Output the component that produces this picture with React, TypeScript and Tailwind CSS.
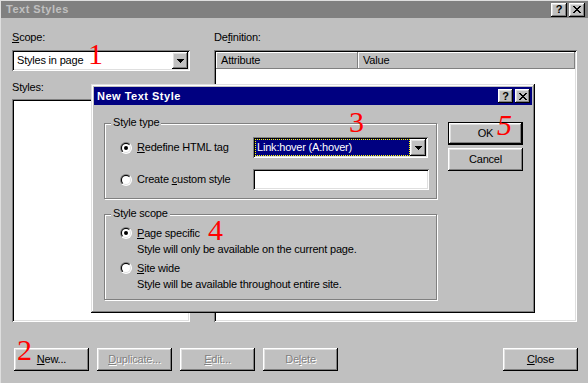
import React from "react";

const raised =
  "shadow-[inset_-1px_-1px_#000,inset_1px_1px_#fff,inset_-2px_-2px_#808080,inset_2px_2px_#dfdfdf]";
const sunken =
  "shadow-[inset_1px_1px_#808080,inset_-1px_-1px_#fff,inset_2px_2px_#000,inset_-2px_-2px_#dfdfdf]";

function U({ children }: { children: React.ReactNode }) {
  return <span className="underline decoration-1 underline-offset-[1px]">{children}</span>;
}

function Arrow() {
  return (
    <svg width="7" height="4" viewBox="0 0 7 4" shapeRendering="crispEdges">
      <path d="M0 0h7v1h-7z M1 1h5v1h-5z M2 2h3v1h-3z M3 3h1v1h-1z" fill="#000" />
    </svg>
  );
}

function CloseGlyph() {
  return (
    <svg width="8" height="7" viewBox="0 0 8 7" shapeRendering="crispEdges">
      <path
        d="M0 0h2v1h-2z M6 0h2v1h-2z M1 1h2v1h-2z M5 1h2v1h-2z M2 2h4v1h-4z M3 3h2v1h-2z M2 4h4v1h-4z M1 5h2v1h-2z M5 5h2v1h-2z M0 6h2v1h-2z M6 6h2v1h-2z"
        fill="#000"
      />
    </svg>
  );
}

function CapBtns({ w }: { w: string }) {
  return (
    <div className="flex gap-[2px]">
      <div className={`${w} h-[14px] bg-[#c0c0c0] ${raised} flex items-center justify-center`}>
        <span className="font-bold text-[11px] leading-none tracking-normal text-black">?</span>
      </div>
      <div className={`${w} h-[14px] bg-[#c0c0c0] ${raised} flex items-center justify-center`}>
        <CloseGlyph />
      </div>
    </div>
  );
}

function Radio({ checked }: { checked?: boolean }) {
  return (
    <svg width="12" height="12" viewBox="0 0 12 12" className="shrink-0">
      <defs>
        <linearGradient id="rg1" x1="0" y1="0" x2="1" y2="1">
          <stop offset="0.5" stopColor="#808080" />
          <stop offset="0.5" stopColor="#ffffff" />
        </linearGradient>
        <linearGradient id="rg2" x1="0" y1="0" x2="1" y2="1">
          <stop offset="0.5" stopColor="#000000" />
          <stop offset="0.5" stopColor="#dfdfdf" />
        </linearGradient>
      </defs>
      <circle cx="6" cy="6" r="6" fill="url(#rg1)" />
      <circle cx="6" cy="6" r="5" fill="url(#rg2)" />
      <circle cx="6" cy="6" r="4" fill="#fff" />
      {checked && <circle cx="6" cy="6" r="2" fill="#000" />}
    </svg>
  );
}

function Button({
  children,
  disabled,
  className = "",
}: {
  children: React.ReactNode;
  disabled?: boolean;
  className?: string;
}) {
  return (
    <div
      className={`w-[75px] h-[23px] bg-[#c0c0c0] ${raised} flex items-center justify-center ${
        disabled ? "text-[#808080] [text-shadow:1px_1px_0_#fff]" : "text-black"
      } ${className}`}
    >
      {children}
    </div>
  );
}

function Group({
  label,
  className = "",
  children,
}: {
  label: string;
  className?: string;
  children: React.ReactNode;
}) {
  return (
    <div
      className={`relative border border-[#808080] shadow-[inset_1px_1px_#fff,1px_1px_#fff] ${className}`}
    >
      <span className="absolute left-[6px] top-[-8px] px-[2px] bg-[#c0c0c0] leading-[13px]">
        {label}
      </span>
      {children}
    </div>
  );
}

const red =
  "absolute text-[30px] leading-none text-[#ff0000] font-['Liberation_Serif',serif] tracking-normal";

export default function App() {
  return (
    <div className="relative w-[588px] h-[383px] bg-[#c0c0c0] border-t border-l border-[#dfdfdf] overflow-hidden font-['Liberation_Sans',Arial,sans-serif] text-[11px] tracking-[-0.2px] text-black flex flex-col">
      {/* Title bar */}
      <div className="h-[17px] shrink-0 bg-[#808080] flex items-center pl-[5px] pr-[3px]">
        <span className="flex-1 font-bold text-[#c0c0c0] tracking-[0.5px] leading-[17px]">
          Text Styles
        </span>
        <CapBtns w="w-[16px]" />
      </div>

      {/* Body */}
      <div className="flex-1 min-h-0 flex flex-col pt-[13px] px-[11px]">
        <div className="flex-1 min-h-0 flex gap-[24px]">
          <div className="w-[178px] flex flex-col">
            <div className="leading-[13px]">
              <U>S</U>cope:
            </div>
            <div className={`mt-[6px] h-[21px] bg-white ${sunken} p-[2px] flex`}>
              <div className="flex-1 pl-[3px] flex items-center leading-[13px]">Styles in page</div>
              <div className={`w-[16px] h-full bg-[#c0c0c0] ${raised} flex items-center justify-center`}>
                <Arrow />
              </div>
            </div>
            <div className="mt-[10px] leading-[13px]">Styles:</div>
            <div className={`mt-[5px] flex-1 bg-white ${sunken}`} />
          </div>
          <div className="w-[363px] flex flex-col">
            <div className="leading-[13px]">
              De<U>f</U>inition:
            </div>
            <div className={`mt-[6px] flex-1 bg-white ${sunken} p-[2px]`}>
              <div className="flex h-[17px]">
                <div className="w-[142px] bg-[#c0c0c0] shadow-[inset_-1px_-1px_#808080,inset_1px_1px_#fff] pl-[5px] leading-[17px]">
                  Attribute
                </div>
                <div className="flex-1 bg-[#c0c0c0] shadow-[inset_-1px_-1px_#808080,inset_1px_1px_#fff] pl-[5px] leading-[17px]">
                  Value
                </div>
              </div>
            </div>
          </div>
        </div>

        <div className="mt-[26px] mb-[12px] flex items-center gap-[8px] pl-[2px] mr-[-1px]">
          <Button>
            <U>N</U>ew...
          </Button>
          <Button disabled>
            <U>D</U>uplicate...
          </Button>
          <Button disabled>
            <U>E</U>dit...
          </Button>
          <Button disabled>
            De<U>l</U>ete
          </Button>
          <Button className="ml-auto">
            <U>C</U>lose
          </Button>
        </div>
      </div>

      {/* Dialog */}
      <div className="absolute left-[90px] top-[83px] w-[444px] h-[229px] bg-[#c0c0c0] shadow-[inset_-1px_-1px_#000,inset_1px_1px_#dfdfdf,inset_-2px_-2px_#808080,inset_2px_2px_#fff] p-[3px] flex flex-col">
        <div className="h-[18px] shrink-0 bg-[#000080] flex items-center pl-[3px] pr-[2px]">
          <span className="flex-1 font-bold text-white tracking-[0.5px] leading-[18px]">
            New Text Style
          </span>
          <CapBtns w="w-[15px]" />
        </div>
        <div className="flex-1 flex pt-[17px] pl-[10px] pr-[9px] gap-[11px]">
          <div className="w-[333px] pt-[1px] flex flex-col gap-[15px]">
            <Group label="Style type" className="h-[76px]">
              <div className="pt-[13px] pl-[15px] flex flex-col gap-[11px]">
                <div className="flex items-center h-[21px]">
                  <div className="w-[133px] flex items-center gap-[5px] leading-[13px]">
                    <Radio checked />
                    <span>
                      <U>R</U>edefine HTML tag
                    </span>
                  </div>
                  <div className={`w-[175px] h-[21px] bg-white ${sunken} p-[2px] flex`}>
                    <div className="flex-1 bg-[#000080] text-white border border-dotted border-[#ffff00] pl-[1px] flex items-center leading-[13px]">
                      Link:hover (A:hover)
                    </div>
                    <div className={`w-[16px] h-full bg-[#c0c0c0] ${raised} flex items-center justify-center`}>
                      <Arrow />
                    </div>
                  </div>
                </div>
                <div className="flex items-center h-[21px]">
                  <div className="w-[133px] flex items-center gap-[5px] leading-[13px]">
                    <Radio />
                    <span>
                      Create <U>c</U>ustom style
                    </span>
                  </div>
                  <div className={`w-[176px] h-[21px] bg-white ${sunken}`} />
                </div>
              </div>
            </Group>
            <Group label="Style scope" className="h-[86px]">
              <div className="pt-[10px] pl-[15px] flex flex-col gap-[3px] leading-[16px]">
                <div>
                  <div className="flex items-center gap-[5px]">
                    <Radio checked />
                    <span>
                      <U>P</U>age specific
                    </span>
                  </div>
                  <div className="pl-[17px]">Style will only be available on the current page.</div>
                </div>
                <div>
                  <div className="flex items-center gap-[5px]">
                    <Radio />
                    <span>
                      <U>S</U>ite wide
                    </span>
                  </div>
                  <div className="pl-[17px]">Style will be available throughout entire site.</div>
                </div>
              </div>
            </Group>
          </div>
          <div className="w-[75px] flex flex-col gap-[3px]">
            <div className="w-[75px] h-[23px] border border-black">
              <div className={`h-full bg-[#c0c0c0] ${raised} flex items-center justify-center`}>OK</div>
            </div>
            <Button>Cancel</Button>
          </div>
        </div>
      </div>

      {/* Annotations */}
      <span className={`${red} left-[87px] top-[38px]`}>1</span>
      <span className={`${red} left-[16px] top-[334px]`}>2</span>
      <span className={`${red} left-[348px] top-[106px]`}>3</span>
      <span className={`${red} left-[207px] top-[214px]`}>4</span>
      <span className={`${red} italic left-[496px] top-[109px]`}>5</span>
    </div>
  );
}
